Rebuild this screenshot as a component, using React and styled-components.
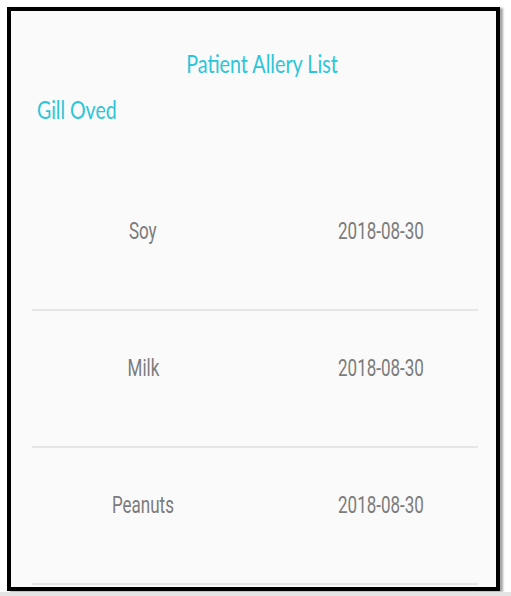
import React from 'react'
import styled, { createGlobalStyle } from 'styled-components'

const GlobalStyle = createGlobalStyle`
    body {
        margin: 0;
        background: #ffffff;
        font-family: Roboto, "Liberation Sans", sans-serif;
        overflow: hidden;
    }
`;

const Page = styled.div`
    width: 511px;
    height: 596px;
    display: flex;
    flex-direction: column;
`;

const Frame = styled.div`
    margin: 7px 0 0 7px;
    width: 493px;
    height: 585px;
    box-sizing: border-box;
    border: 4px solid #000;
    background: #fafafa;
    box-shadow: 3px 1px 2px rgba(0, 0, 0, 0.35);
    overflow: hidden;
    display: flex;
    flex-direction: column;
`;

const BottomStrip = styled.div`
    margin-top: 1px;
    height: 4px;
    background: #e4e4e4;
`;

const Squeeze = styled.span`
    display: inline-block;
    white-space: nowrap;
    transform: scaleX(${(props) => props.scale || 0.74});
    transform-origin: ${(props) => props.origin || 'center'};
`;

const Title = styled.h1`
    margin: 37px 0 0 0;
    padding-left: 17px;
    font-family: Lato, "Open Sans", sans-serif;
    font-weight: 400;
    font-size: 25px;
    line-height: 30px;
    color: #2cc5d9;
    text-align: center;
`;

const PatientName = styled.h2`
    margin: 16px 0 0 26px;
    font-family: Lato, "Open Sans", sans-serif;
    font-weight: 400;
    font-size: 25px;
    line-height: 30px;
    color: #2cc5d9;
`;

const AllergyList = styled.ul`
    list-style: none;
    margin: 50px 18px 0 21px;
    padding: 0;
`;

const AllergyRow = styled.li`
    display: grid;
    grid-template-columns: 222px 1fr;
    column-gap: 84px;
    align-items: center;
    padding: 44px 0 63px 0;
    border-bottom: 2px solid #e6e6e6;
    font-size: 23px;
    line-height: 28px;
    color: #7c7c7c;
`;

const Allergen = styled.div`
    text-align: center;
`;

const AllergyDate = styled.div`
    text-align: left;
`;

const allergies = [
    { name: 'Soy', date: '2018-08-30' },
    { name: 'Milk', date: '2018-08-30' },
    { name: 'Peanuts', date: '2018-08-30' },
];

const App = () => {
    return (
        <>
            <GlobalStyle />
            <Page>
                <Frame>
                    <Title><Squeeze scale={0.79}>Patient Allery List</Squeeze></Title>
                    <PatientName><Squeeze scale={0.78} origin="left">Gill Oved</Squeeze></PatientName>
                    <AllergyList>
                        { allergies.map((a) => (
                            <AllergyRow key={ a.name }>
                                <Allergen><Squeeze>{ a.name }</Squeeze></Allergen>
                                <AllergyDate><Squeeze origin="left">{ a.date }</Squeeze></AllergyDate>
                            </AllergyRow>
                        )) }
                    </AllergyList>
                </Frame>
                <BottomStrip />
            </Page>
        </>
    );
}

export default App;
